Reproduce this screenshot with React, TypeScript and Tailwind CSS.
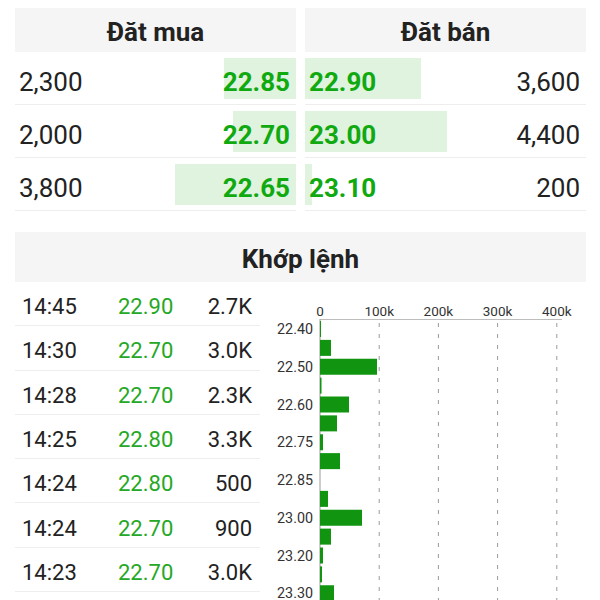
import React from "react";

const buy = [
  { vol: "2,300", price: "22.85", w: 72 },
  { vol: "2,000", price: "22.70", w: 63 },
  { vol: "3,800", price: "22.65", w: 121 },
];
const sell = [
  { vol: "3,600", price: "22.90", w: 116 },
  { vol: "4,400", price: "23.00", w: 142 },
  { vol: "200", price: "23.10", w: 7 },
];
const trades = [
  ["14:45", "22.90", "2.7K"],
  ["14:30", "22.70", "3.0K"],
  ["14:28", "22.70", "2.3K"],
  ["14:25", "22.80", "3.3K"],
  ["14:24", "22.80", "500"],
  ["14:24", "22.70", "900"],
  ["14:23", "22.70", "3.0K"],
];
const yLabels = ["22.40", "22.50", "22.60", "22.75", "22.85", "23.00", "23.20", "23.30"];
const bars = [1, 11, 57, 1.5, 29, 17, 3, 20, 0, 8, 42, 11, 3, 2, 14];

function Chart() {
  const x0 = 60;
  const step = 59.2;
  return (
    <svg width={340} height={320} className="block">
      {[1, 2, 3, 4].map((i) => (
        <line
          key={i}
          x1={x0 + i * step}
          x2={x0 + i * step}
          y1={41}
          y2={320}
          stroke="#9a9a9a"
          strokeWidth={1}
          strokeDasharray="4 7"
        />
      ))}
      <line x1={x0} x2={302} y1={37.5} y2={37.5} stroke="#bdbdbd" strokeWidth={1} />
      <line x1={x0} x2={x0} y1={37} y2={320} stroke="#9a9a9a" strokeWidth={1} />
      {["0", "100k", "200k", "300k", "400k"].map((t, i) => (
        <text
          key={t}
          x={x0 + i * step}
          y={33.5}
          textAnchor="middle"
          fontSize={13.5}
          fill="#333"
          fontFamily="Roboto, sans-serif"
        >
          {t}
        </text>
      ))}
      {yLabels.map((t, k) => (
        <text
          key={t}
          x={53}
          y={47 + k * 37.75 + 5}
          textAnchor="end"
          fontSize={14.3}
          fill="#333"
          fontFamily="Roboto, sans-serif"
        >
          {t}
        </text>
      ))}
      {bars.map((w, j) =>
        w > 0 ? (
          <rect key={j} x={x0} y={47 + j * 18.875 - 8} width={w} height={16} fill="#119511" />
        ) : null
      )}
    </svg>
  );
}

export default function App() {
  return (
    <div className="w-[600px] h-[600px] overflow-hidden bg-white text-[#222]" style={{ fontFamily: "Roboto, 'Noto Sans', sans-serif" }}>
      <div className="grid grid-cols-2 gap-[9px] pl-[15px] pr-[14px] pt-[8px]">
        <div>
          <div className="h-[44px] pt-[4px] bg-[#f5f5f5] flex items-center justify-center text-[26px] font-bold">Đăt mua</div>
          {buy.map((r) => (
            <div key={r.price} className="relative h-[53px] pt-[8px] border-b border-[#eeeeee] flex items-center justify-between">
              <div className="absolute right-0 top-[6px] h-[41px] bg-[#dff3df]" style={{ width: r.w }} />
              <span className="relative pl-[4px] text-[26px]">{r.vol}</span>
              <span className="relative pr-[6px] text-[26px] font-bold text-[#10a910]">{r.price}</span>
            </div>
          ))}
        </div>
        <div>
          <div className="h-[44px] pt-[4px] bg-[#f5f5f5] flex items-center justify-center text-[26px] font-bold">Đăt bán</div>
          {sell.map((r) => (
            <div key={r.price} className="relative h-[53px] pt-[8px] border-b border-[#eeeeee] flex items-center justify-between">
              <div className="absolute left-0 top-[6px] h-[41px] bg-[#dff3df]" style={{ width: r.w }} />
              <span className="relative pl-[4px] text-[26px] font-bold text-[#10a910]">{r.price}</span>
              <span className="relative pr-[6px] text-[26px]">{r.vol}</span>
            </div>
          ))}
        </div>
      </div>
      <div className="pl-[15px] pr-[14px] mt-[21px]">
        <div className="h-[50px] pt-[4px] bg-[#f5f5f5] flex items-center justify-center text-[26px] font-bold">Khớp lệnh</div>
      </div>
      <div className="flex">
        <div className="ml-[15px] w-[245px]">
          {trades.map((t, i) => (
            <div key={i} className="h-[44.3px] pt-[6px] border-b border-[#eeeeee] flex items-center text-[22px]">
              <span className="w-[103px] pl-[7px]">{t[0]}</span>
              <span className="flex-1 text-[#25a825]">{t[1]}</span>
              <span className="pr-[8px] text-right">{t[2]}</span>
            </div>
          ))}
        </div>
        <Chart />
      </div>
    </div>
  );
}
